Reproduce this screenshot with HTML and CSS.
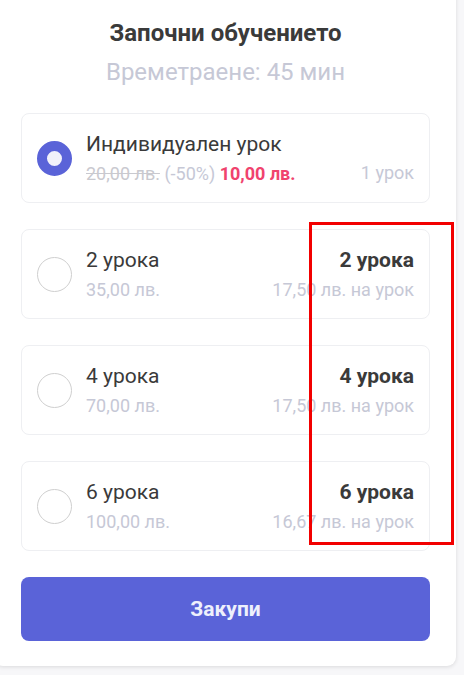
FILE: index.html
```html
<!DOCTYPE html>
<html lang="bg">
<head>
  <meta charset="UTF-8" />
  <meta name="viewport" content="width=device-width, initial-scale=1.0" />
  <title>Започни обучението</title>
  <link rel="stylesheet" href="styles.css">
</head>
<body>
  <div class="card">
    <h2 class="title">Започни обучението</h2>
    <p class="duration">Времетраене: 45 мин</p>

    <div class="options">
      <label class="option selected">
        <span class="radio"></span>
        <span class="info">
          <span class="name">Индивидуален урок</span>
          <span class="price"><s>20,00 лв.</s> (-50%) <b class="sale">10,00 лв.</b></span>
        </span>
        <span class="side">
          <span class="per">1 урок</span>
        </span>
      </label>

      <label class="option">
        <span class="radio"></span>
        <span class="info">
          <span class="name">2 урока</span>
          <span class="price">35,00 лв.</span>
        </span>
        <span class="side">
          <span class="count">2 урока</span>
          <span class="per">17,50 лв. на урок</span>
        </span>
      </label>

      <label class="option">
        <span class="radio"></span>
        <span class="info">
          <span class="name">4 урока</span>
          <span class="price">70,00 лв.</span>
        </span>
        <span class="side">
          <span class="count">4 урока</span>
          <span class="per">17,50 лв. на урок</span>
        </span>
      </label>

      <label class="option">
        <span class="radio"></span>
        <span class="info">
          <span class="name">6 урока</span>
          <span class="price">100,00 лв.</span>
        </span>
        <span class="side">
          <span class="count">6 урока</span>
          <span class="per">16,67 лв. на урок</span>
        </span>
      </label>
    </div>

    <button class="buy">Закупи</button>
  </div>

  <div class="highlight"></div>
</body>
</html>
```

FILE: styles.css
```css
:root {
  --primary: #5a63d8;
  --text: #3a3a3a;
  --muted: #c6c8d6;
  --line: #eeeff2;
  --sale: #f0436e;
}

body {
  margin: 0;
  background: #f7f7f9;
  font-family: Roboto, "Noto Sans", sans-serif;
  color: var(--text);
  position: relative;
  height: 675px;
  overflow: hidden;
}

.card {
  box-sizing: border-box;
  width: 462px;
  margin: -20px 0 0 -6px;
  padding: 38px 26px 25px 27px;
  background: #fff;
  border-radius: 0 0 9px 9px;
  box-shadow: 0 1px 4px rgba(0, 0, 0, 0.12);
}

.title {
  margin: 0;
  text-align: center;
  font-size: 24px;
  font-weight: 700;
  line-height: 30px;
}

.duration {
  margin: 9px 0 0;
  text-align: center;
  font-size: 24px;
  line-height: 30px;
  color: var(--muted);
}

.options {
  display: flex;
  flex-direction: column;
  gap: 26px;
  margin-top: 26px;
}

.option {
  display: flex;
  align-items: center;
  height: 90px;
  box-sizing: border-box;
  padding: 2px 15px 0;
  border: 1px solid var(--line);
  border-radius: 8px;
}

.radio {
  flex: none;
  width: 35px;
  height: 35px;
  box-sizing: border-box;
  border: 1.5px solid #cfcfcf;
  border-radius: 50%;
  margin-right: 14px;
  margin-top: -2px;
}

.selected .radio {
  border: 10px solid var(--primary);
  background: #f1f1fa;
}

.info,
.side {
  display: flex;
  flex-direction: column;
  gap: 5px;
}

.info {
  flex: 1;
}

.side {
  align-items: flex-end;
  align-self: stretch;
  justify-content: center;
}

.selected .side {
  justify-content: flex-end;
  padding-bottom: 17px;
  box-sizing: border-box;
}

.name {
  font-size: 21px;
  line-height: 25px;
}

.count {
  font-size: 21px;
  line-height: 25px;
  font-weight: 700;
}

.price,
.per {
  font-size: 18px;
  line-height: 24px;
  color: var(--muted);
}

.price s {
  color: #c9c9cf;
}

.sale {
  color: var(--sale);
}

.buy {
  display: block;
  width: 100%;
  height: 64px;
  margin-top: 26px;
  border: 0;
  border-radius: 8px;
  background: var(--primary);
  color: #eef0fc;
  font-family: Roboto, "Noto Sans", sans-serif;
  font-size: 21px;
  font-weight: 700;
}

.highlight {
  position: absolute;
  left: 309px;
  top: 222px;
  width: 145px;
  height: 323px;
  box-sizing: border-box;
  border: 3px solid #f20000;
}
```
